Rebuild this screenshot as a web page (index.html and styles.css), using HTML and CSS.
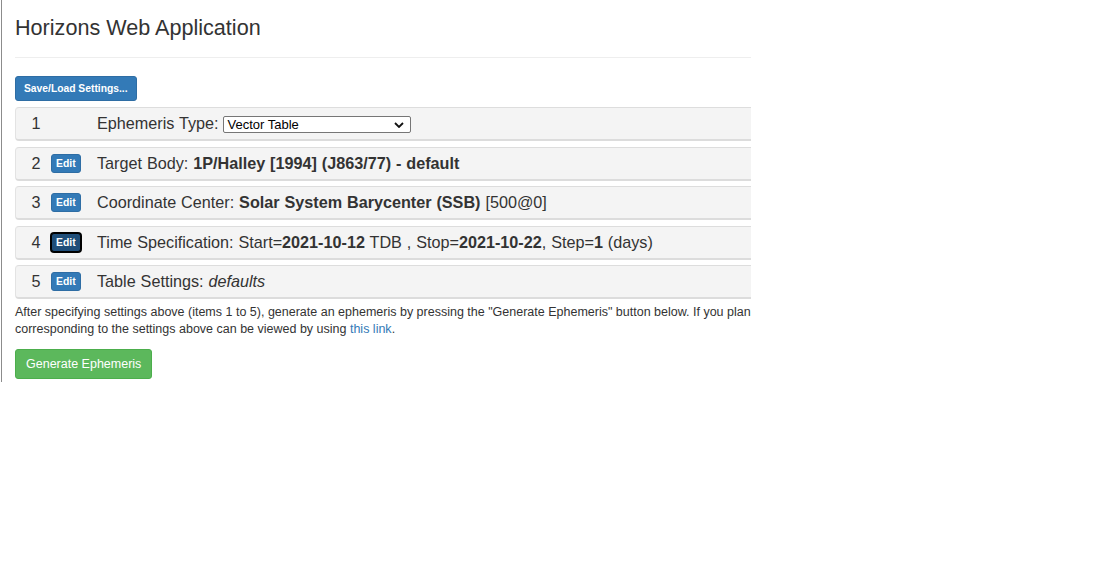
FILE: index.html
```html
<!DOCTYPE html>
<html>
<head>
<meta charset="utf-8">
<title>Horizons Web Application</title>
<link rel="stylesheet" href="styles.css">
</head>
<body>
<div class="frame">
  <div class="page">
    <h3 class="title">Horizons Web Application</h3>
    <button class="btn btn-primary btn-save">Save/Load Settings...</button>

    <div class="rows">
      <div class="row">
        <span class="num">1</span>
        <span class="edit-cell"></span>
        <span class="label">Ephemeris Type: <span class="sel-wrap"><select class="sel"><option>Vector Table</option></select><svg class="chev" width="10" height="6" viewBox="0 0 10 6"><path d="M1 1 L5 5 L9 1" fill="none" stroke="#111" stroke-width="1.8"/></svg></span></span>
      </div>
      <div class="row">
        <span class="num">2</span>
        <span class="edit-cell"><button class="btn btn-primary btn-edit">Edit</button></span>
        <span class="label">Target Body: <b>1P/Halley [1994] (J863/77) - default</b></span>
      </div>
      <div class="row">
        <span class="num">3</span>
        <span class="edit-cell"><button class="btn btn-primary btn-edit">Edit</button></span>
        <span class="label">Coordinate Center: <b>Solar System Barycenter (SSB)</b> [500@0]</span>
      </div>
      <div class="row">
        <span class="num">4</span>
        <span class="edit-cell"><button class="btn btn-primary btn-edit focused">Edit</button></span>
        <span class="label">Time Specification: Start=<b>2021-10-12</b> TDB , Stop=<b>2021-10-22</b>, Step=<b>1</b> (days)</span>
      </div>
      <div class="row">
        <span class="num">5</span>
        <span class="edit-cell"><button class="btn btn-primary btn-edit">Edit</button></span>
        <span class="label">Table Settings: <i>defaults</i></span>
      </div>
    </div>

    <p class="help">After specifying settings above (items 1 to 5), generate an ephemeris by pressing the "Generate Ephemeris" button below. If you plan<br>corresponding to the settings above can be viewed by using <a href="#">this link</a>.</p>

    <button class="btn btn-success btn-gen">Generate Ephemeris</button>
  </div>
</div>
</body>
</html>
```

FILE: styles.css
```css
html, body {
  margin: 0;
  padding: 0;
  background: #fff;
}

body {
  font-family: "Liberation Sans", Arial, Helvetica, sans-serif;
  color: #333;
}

.frame {
  margin-left: 1px;
  width: 749px;
  height: 382px;
  border-left: 1px solid #8c8c8c;
  overflow: hidden;
}

.page {
  width: 1100px;
  padding-left: 13px;
}

.title {
  margin: 15px 0 0 0;
  padding-bottom: 16px;
  border-bottom: 1px solid #eee;
  font-size: 21.6px;
  line-height: 26px;
  font-weight: 500;
  color: #333;
}

.btn {
  display: inline-block;
  font-family: "Liberation Sans", Arial, sans-serif;
  color: #fff;
  border: 1px solid transparent;
  cursor: pointer;
  white-space: nowrap;
}

.btn-primary {
  background: #337ab7;
  border-color: #2e6da4;
}

.btn-success {
  background: #5cb85c;
  border-color: #4cae4c;
}

.btn-save {
  margin-top: 18px;
  font-size: 10.3px;
  font-weight: bold;
  line-height: 15px;
  padding: 4px 8px;
  border-radius: 3px;
}

.rows {
  margin-top: 6px;
  display: flex;
  flex-direction: column;
  gap: 5.5px;
}

.row {
  display: flex;
  align-items: center;
  height: 31px;
  background: #f4f4f4;
  border: 1px solid #e3e3e3;
  border-top-color: #ddd;
  border-bottom: 2px solid #dcdcdc;
  border-right: none;
  border-radius: 4px 0 0 4px;
  font-size: 16.2px;
}

.num {
  width: 35px;
  box-sizing: border-box;
  padding-left: 15.5px;
  flex: none;
}

.edit-cell {
  width: 46px;
  flex: none;
  display: flex;
  align-items: center;
}

.btn-edit {
  font-size: 10.4px;
  font-weight: bold;
  line-height: 15px;
  padding: 1px 4px;
  border-radius: 3px;
}

.btn-edit.focused {
  background: #1f4e79;
  border: 1px solid #000;
  box-shadow: 0 0 0 1px #000;
}

.label {
  display: block;
  white-space: nowrap;
  word-spacing: 0.4px;
}

.label b {
  font-weight: bold;
}

.sel-wrap {
  position: relative;
  display: inline-block;
  vertical-align: middle;
  margin-top: 0;
  word-spacing: 0;
}

.sel {
  display: block;
  -webkit-appearance: none;
  appearance: none;
  width: 188px;
  height: 17px;
  margin: 0;
  font-family: "Liberation Sans", Arial, sans-serif;
  font-size: 13px;
  line-height: 15px;
  padding: 0 0 0 3px;
  border: 1px solid #767676;
  border-radius: 2px;
  background: #fff;
  color: #000;
}

.chev {
  position: absolute;
  right: 7px;
  top: 6px;
  pointer-events: none;
}

.help {
  margin: 5px 0 0 0;
  font-size: 12.5px;
  line-height: 17px;
  white-space: nowrap;
}

.help a {
  color: #337ab7;
  text-decoration: none;
}

.btn-gen {
  margin-top: 11px;
  font-size: 12.5px;
  line-height: 18px;
  padding: 5px 10px;
  border-radius: 3px;
}
```
